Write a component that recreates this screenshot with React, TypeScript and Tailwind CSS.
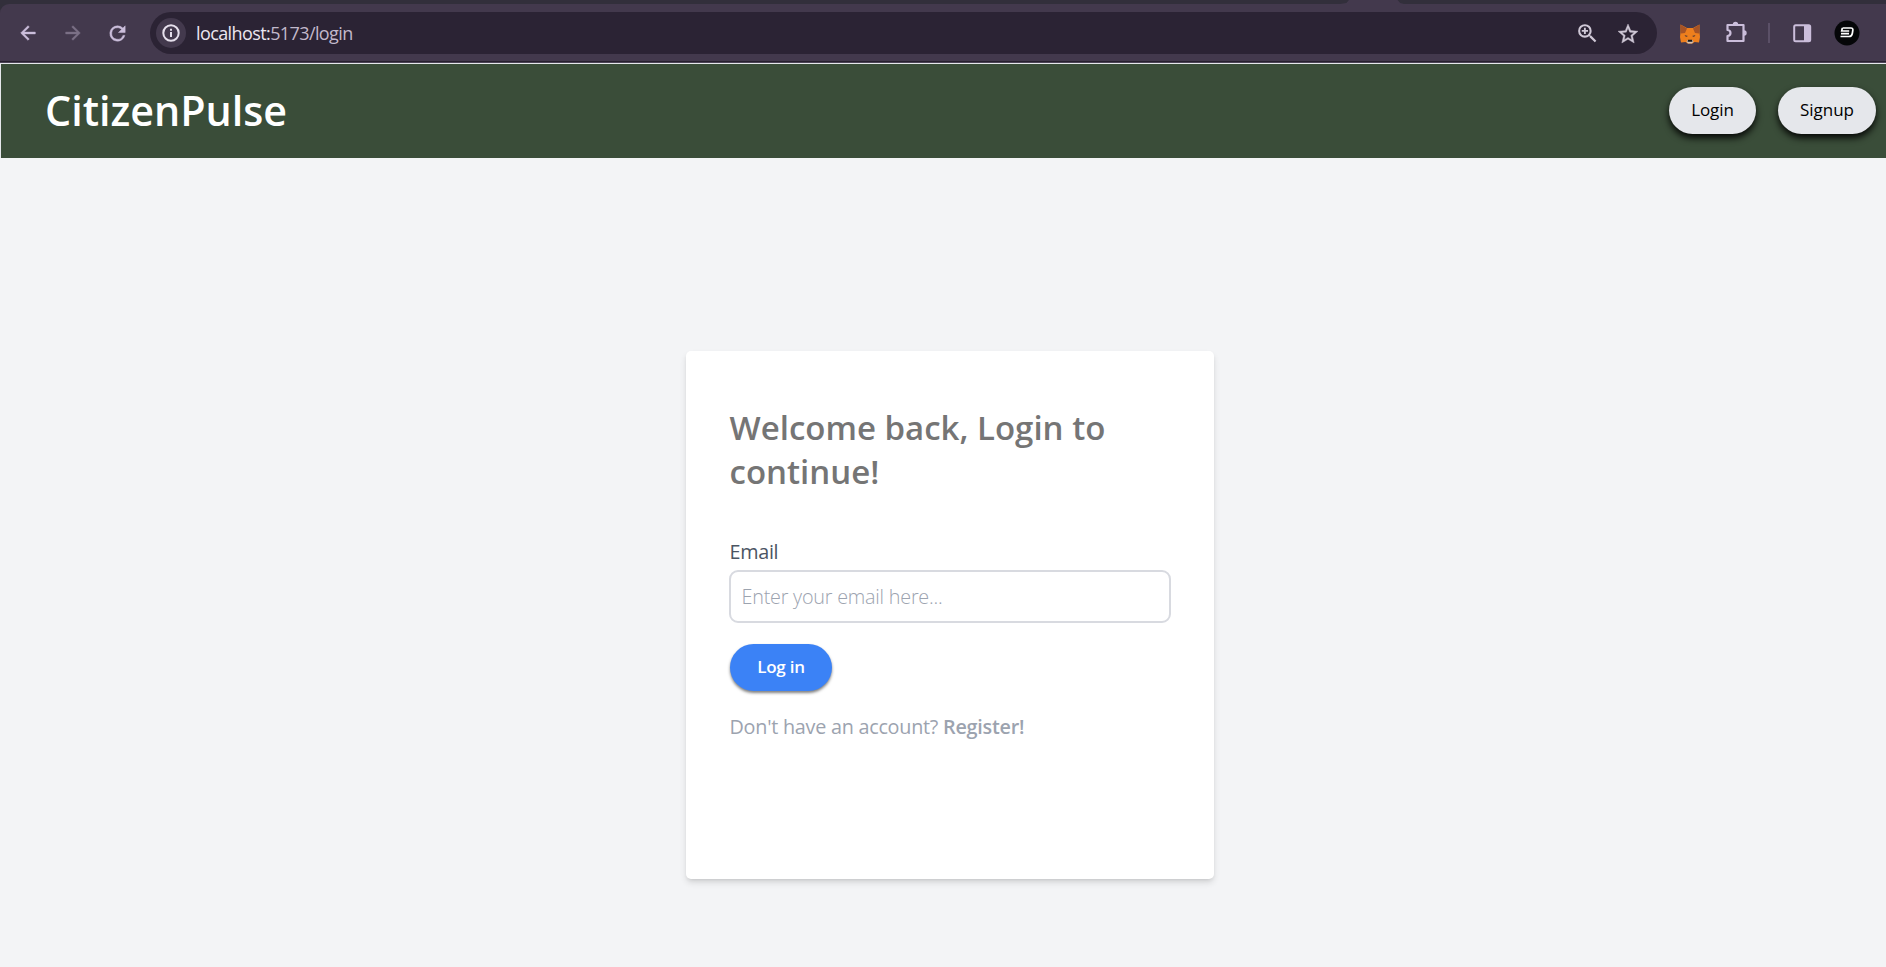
import React from "react";

const chromeIcon = "shrink-0";

function BackArrow() {
  return (
    <svg className={chromeIcon} width="22" height="22" viewBox="0 0 24 24" fill="#cbbedb" stroke="#cbbedb" strokeWidth="0.500">
      <path d="M20 11H7.830l5.590-5.590L12 4l-8 8 8 8 1.410-1.410L7.830 13H20v-2z" />
    </svg>
  );
}

function ForwardArrow() {
  return (
    <svg className={chromeIcon} width="22" height="22" viewBox="0 0 24 24" fill="#7b7086" stroke="#7b7086" strokeWidth="0.500">
      <path d="M12 4l-1.410 1.410L16.170 11H4v2h12.170l-5.580 5.590L12 20l8-8z" />
    </svg>
  );
}

function Reload() {
  return (
    <svg className={chromeIcon} width="23" height="23" viewBox="0 0 24 24" fill="#cbbedb" stroke="#cbbedb" strokeWidth="0.500">
      <path d="M17.650 6.350A7.960 7.960 0 0 0 12 4a8 8 0 1 0 7.730 10h-2.080A6 6 0 1 1 12 6c1.660 0 3.140.690 4.220 1.780L13 11h7V4l-2.350 2.350z" />
    </svg>
  );
}

function Fox() {
  return (
    <svg className="mt-px shrink-0" width="20" height="20" viewBox="0 0 20 20">
      <path d="M0.500 0.500L7 4h6l6.500-3.500L19.500 8l.5 5-1 5.500-4.500-.5-2 1.500h-5l-2-1.500-4.500.5L0 13l.5-5z" fill="#ee7f1d" />
      <path d="M0.500 0.500L7 4.500 5 9 1 9.500zM19.500 0.500L13 4.500 15 9l4 .5z" fill="#a65326" />
      <path d="M4.500 11l3.500 1-2 1zM15.500 11L12 12l2 1z" fill="#573a34" />
      <path d="M7.500 16h5l1 1.500-1.500 2H8l-1.500-2z" fill="#d5c4b5" />
      <path d="M8 15.800h4l.5 2h-5z" fill="#17191c" />
    </svg>
  );
}

function Browser() {
  return (
    <div className="flex h-[63px] shrink-0 flex-col bg-[#322f3b]">
      <div className="flex h-1 shrink-0 justify-end pr-[482px]">
        <div className="h-1 w-[64px] bg-[#43394d] [clip-path:polygon(14%_0,90%_0,94%_75%,100%_100%,0_100%,10%_75%)]" />
      </div>
      <div className="flex h-[57px] shrink-0 items-center rounded-tl-[9px] bg-[#43394d] pt-px">
        <div className="ml-[17px] flex w-[133px] items-center gap-[22.500px]">
          <BackArrow />
          <ForwardArrow />
          <Reload />
        </div>
        <div className="flex h-[42px] w-[1507px] items-center rounded-full bg-[#2b2334] pl-[6px] pr-[17px]">
          <div className="flex size-[30px] items-center justify-center rounded-full bg-[#43394d]">
            <svg width="20" height="20" viewBox="0 0 20 20" fill="none" stroke="#e6e0ec" strokeWidth="2">
              <circle cx="10" cy="10" r="7.700" />
              <path d="M10 9v5M10 5.700v2" />
            </svg>
          </div>
          <div className="ml-[10px] pt-px font-['Open_Sans'] text-[18px] tracking-[-0.600px] text-[#c2b9cb]">
            <span className="text-[#ebe6f0]">localhost:</span>5173/login
          </div>
          <div className="ml-auto flex items-center gap-[16px] pt-px">
            <svg width="25" height="25" viewBox="0 0 24 24" fill="#cfc8d6">
              <path d="M15.500 14h-.79l-.28-.27A6.470 6.470 0 0 0 16 9.500 6.500 6.500 0 1 0 9.500 16c1.610 0 3.090-.59 4.230-1.570l.27.28v.79l5 4.990L20.490 19l-4.990-5zm-6 0C7.010 14 5 11.990 5 9.500S7.010 5 9.500 5 14 7.010 14 9.500 11.990 14 9.500 14zm.9-7.500H8.600v2.100H6.500v1.800h2.100v2.100h1.800v-2.100h2.100V8.600h-2.100z" />
            </svg>
            <svg width="24" height="24" viewBox="0 0 24 24" fill="#cfc8d6" stroke="#cfc8d6" strokeWidth="0.400">
              <path d="M22 9.240l-7.190-.62L12 2 9.190 8.630 2 9.240l5.460 4.730L5.820 21 12 17.270 18.180 21l-1.630-7.030L22 9.240zM12 15.400l-3.760 2.270 1-4.280-3.320-2.880 4.380-.38L12 6.100l1.710 4.040 4.380.38-3.320 2.880 1 4.280L12 15.400z" />
            </svg>
          </div>
        </div>
        <div className="ml-[23px] flex items-center">
          <Fox />
          <svg className="-mt-[3px] ml-[24px]" width="24" height="24" viewBox="0 0 24 24" fill="none" stroke="#cbbedb" strokeWidth="2.200" strokeLinejoin="round">
            <path d="M3.500 5h16v16h-16v-5c4-.5 4-5.500 0-6z" />
            <path d="M9.500 4.500a2 2 0 0 1 4 0zM20 11a2 2 0 0 1 0 4z" fill="#cbbedb" strokeWidth="1.400" />
          </svg>
          <div className="ml-[20px] h-5 w-[2px] bg-[#5b5067]" />
          <svg className="ml-[23px]" width="19" height="19" viewBox="0 0 19 19" fill="none">
            <rect x="1.200" y="1.200" width="16" height="16" rx="1.500" stroke="#cbbedb" strokeWidth="2" />
            <path d="M11 1h6v16h-6z" fill="#cbbedb" />
          </svg>
          <svg className="-mt-px ml-[22px]" width="26" height="26" viewBox="0 0 26 26" fill="none">
            <circle cx="13" cy="13" r="12.500" fill="#050608" />
            <path d="M8.500 8h8.500q2.200 0 1.800 2.500l-.5 3q-.5 3-3.300 3H6.500M8.300 8l-.6 3h7.500M15 13.600H7" stroke="#fff" strokeWidth="1.700" />
          </svg>
        </div>
      </div>
      <div className="h-px shrink-0 bg-[#27202f]" />
      <div className="h-px shrink-0 bg-[#4d4458]" />
    </div>
  );
}

export default function App() {
  return (
    <div className="flex h-[967px] w-full flex-col overflow-hidden bg-[#f3f4f6] font-['Open_Sans',sans-serif]">
      <Browser />
      <header className="flex h-[95px] shrink-0 items-center justify-between border-l border-t border-[#e5e7eb] bg-[#3a4d39] pb-px pl-[44px] pr-[10px]">
        <h1 className="pb-[2px] text-[41.250px] font-semibold leading-[44px] text-white">CitizenPulse</h1>
        <nav className="flex gap-[22px] text-[17px] font-medium text-black">
          <button className="h-[47px] w-[87px] rounded-[24px] bg-[#e5e7eb] pb-[2px] tracking-[-0.100px] shadow-[0_4px_7px_rgba(0,0,0,0.9)]">Login</button>
          <button className="h-[47px] w-[98px] rounded-[24px] bg-[#e5e7eb] pb-[2px] tracking-[-0.050px] shadow-[0_4px_7px_rgba(0,0,0,0.9)]">Signup</button>
        </nav>
      </header>
      <main className="flex justify-center pl-[13px] pt-[193px]">
        <section className="flex h-[528px] w-[528px] flex-col items-start rounded-[5px] bg-white px-[44px] pt-[55px] shadow-[0_4px_7px_-1px_rgba(0,0,0,0.14),0_2px_4px_-2px_rgba(0,0,0,0.12)]">
          <h2 className="text-[33px] font-semibold leading-[44px] text-[#757575]">Welcome back, Login to continue!</h2>
          <label className="mt-[43px] text-[19.800px] leading-[30px] tracking-[-0.300px] text-[#4b5563]">Email</label>
          <input
            className="-ml-px mt-[3px] h-[53px] w-[442px] rounded-[9px] border-2 border-[#d8dae0] px-[11px] text-[19.800px] font-light tracking-[-0.220px] outline-none placeholder:text-[#9ca3af]"
            placeholder="Enter your email here..."
          />
          <button className="mt-[21px] h-[47px] w-[102px] rounded-[24px] bg-[#3b82f6] pb-[2px] pl-px text-[17px] font-semibold tracking-[-0.250px] text-white shadow-[0_2px_3px_rgba(0,0,0,0.5)]">Log in</button>
          <p className="mt-[21px] text-[19.800px] leading-[30px] tracking-[-0.250px] text-[#9ca3af]">
            Don't have an account? <a className="font-semibold">Register!</a>
          </p>
        </section>
      </main>
    </div>
  );
}
